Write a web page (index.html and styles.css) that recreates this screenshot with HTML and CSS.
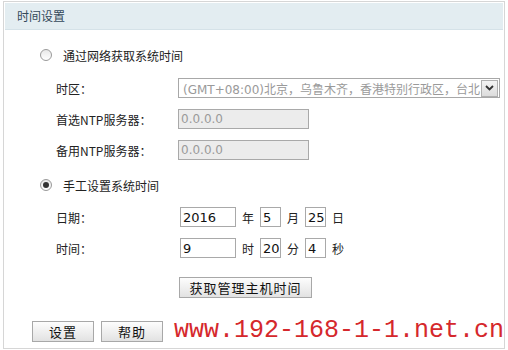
FILE: index.html
```html
<!DOCTYPE html>
<html lang="zh-CN">
<head>
    <meta charset="UTF-8">
    <title>时间设置</title>
    <link rel="stylesheet" href="styles.css">
</head>
<body>

<div class="panel">
    <div class="title">时间设置</div>
    <div class="content">
        <div class="opt"><span class="radio"></span>通过网络获取系统时间</div>
        <div class="row">
            <span class="label">时区：</span>
            <div class="select">
                <span class="select-text">(GMT+08:00)北京，乌鲁木齐，香港特别行政区，台北</span>
                <span class="arrow"><svg width="9" height="6" viewBox="0 0 9 6"><path d="M1 1 L4.5 4.5 L8 1" fill="none" stroke="#333" stroke-width="1.8"/></svg></span>
            </div>
        </div>
        <div class="row">
            <span class="label">首选NTP服务器：</span>
            <span class="field disabled">0.0.0.0</span>
        </div>
        <div class="row">
            <span class="label">备用NTP服务器：</span>
            <span class="field disabled">0.0.0.0</span>
        </div>
        <div class="opt opt-2"><span class="radio checked"></span>手工设置系统时间</div>
        <div class="row row-date">
            <span class="label">日期：</span>
            <span class="field wide">2016</span><span class="unit">年</span>
            <span class="field small">5</span><span class="unit">月</span>
            <span class="field small">25</span><span class="unit">日</span>
        </div>
        <div class="row">
            <span class="label">时间：</span>
            <span class="field wide">9</span><span class="unit">时</span>
            <span class="field small">20</span><span class="unit">分</span>
            <span class="field small">4</span><span class="unit">秒</span>
        </div>
        <div class="row row-btn">
            <span class="label"></span>
            <button class="btn btn-host">获取管理主机时间</button>
        </div>
        <div class="footer">
            <button class="btn btn-small">设置</button>
            <button class="btn btn-small">帮助</button>
            <span class="mark">www.192-168-1-1.net.cn</span>
        </div>
    </div>
</div>

</body>
</html>
```

FILE: styles.css
```css
body {
    margin: 0;
    background: #fff;
    font-family: "DejaVu Sans", "Noto Sans CJK SC", sans-serif;
    font-size: 12px;
    color: #222;
}
.panel {
    margin: 1px 3px 0 3px;
    height: 348px;
    border: 1px solid #d6d6d6;
    box-sizing: border-box;
}
.title {
    margin: 1px 1px 0 1px;
    height: 26px;
    line-height: 26px;
    padding-left: 12px;
    background: #e3edf1;
    border-bottom: 1px solid #d5e2e8;
    font-family: "Noto Sans CJK SC", sans-serif;
    font-size: 12px;
    color: #33495a;
}
.content {
    display: flex;
    flex-direction: column;
    gap: 11px;
    padding-top: 15px;
}
.opt {
    display: flex;
    align-items: center;
    height: 20px;
    padding-left: 36px;
    font-family: "Noto Sans CJK SC", sans-serif;
}
.opt-2 {
    margin-top: 4px;
}
.radio {
    width: 10px;
    height: 10px;
    border: 1px solid #9a9a9a;
    border-radius: 50%;
    background: linear-gradient(#e8e8e8, #fff);
    margin-right: 11px;
    display: flex;
    align-items: center;
    justify-content: center;
}
.radio.checked::after {
    content: "";
    width: 6px;
    height: 6px;
    border-radius: 50%;
    background: #333;
}
.row {
    display: flex;
    align-items: center;
    height: 20px;
}
.row:nth-of-type(2) {
    margin-top: 2px;
}
.row-date {
    margin-top: 1px;
}
.label {
    width: 122px;
    padding-left: 52px;
    flex-shrink: 0;
    font-family: "Noto Sans CJK SC", sans-serif;
}
.select {
    display: flex;
    align-items: center;
    justify-content: space-between;
    width: 322px;
    height: 20px;
    box-sizing: border-box;
    border: 1px solid #a8a8a8;
    padding: 0 1px 0 4px;
    color: #9a9a9a;
    white-space: nowrap;
    overflow: hidden;
}
.arrow {
    display: flex;
    align-items: center;
    justify-content: center;
    width: 15px;
    height: 15px;
    border: 1px solid #b0b0b0;
    background: linear-gradient(#f4f4f4, #dcdcdc);
}
.field {
    display: flex;
    align-items: center;
    height: 20px;
    box-sizing: border-box;
    border: 1px solid #a9a9a9;
    padding-left: 2px;
    font-size: 13px;
    color: #111;
    background: #fff;
}
.field.disabled {
    width: 131px;
    background: #ececec;
    color: #9a9a9a;
    font-size: 12px;
}
.field.wide {
    width: 56px;
    margin-left: 2px;
}
.field.small {
    width: 21px;
}
.unit {
    padding: 0 6px;
    font-family: "Noto Sans CJK SC", sans-serif;
}
.btn {
    height: 21px;
    padding: 0;
    border: 1px solid #a8a8a8;
    background: linear-gradient(#fdfdfd, #e2e2e2);
    font-family: "Noto Sans CJK SC", sans-serif;
    font-size: 13px;
    color: #111;
    letter-spacing: 1px;
}
.row-btn {
    margin-top: 8px;
    height: 21px;
}
.btn-host {
    width: 133px;
    margin-left: 1px;
}
.footer {
    display: flex;
    align-items: center;
    margin-top: 10px;
    padding-left: 28px;
    gap: 7px;
}
.btn-small {
    width: 62px;
}
.mark {
    margin-left: 4px;
    font-family: "Liberation Mono", monospace;
    font-size: 25px;
    line-height: 24px;
    color: #d5282c;
    white-space: nowrap;
}
```
